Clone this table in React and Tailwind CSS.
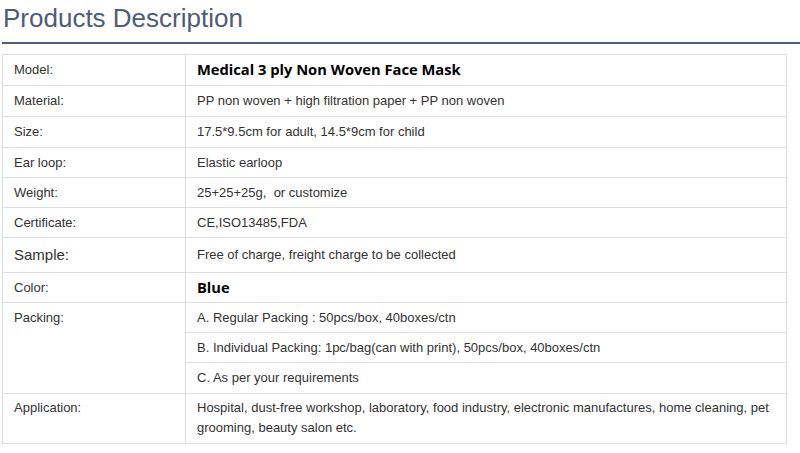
import React from "react";

const rows = [
  { label: "Model:", values: ["Medical 3 ply Non Woven Face Mask"], bold: true, h: "h-[31px]" },
  { label: "Material:", values: ["PP non woven + high filtration paper + PP non woven"], h: "h-[31px]" },
  { label: "Size:", values: ["17.5*9.5cm for adult, 14.5*9cm for child"], h: "h-[31px]" },
  { label: "Ear loop:", values: ["Elastic earloop"], h: "h-[30px]" },
  { label: "Weight:", values: ["25+25+25g,\u00a0 or customize"], h: "h-[30px]" },
  { label: "Certificate:", values: ["CE,ISO13485,FDA"], h: "h-[30px]" },
  { label: "Sample:", values: ["Free of charge, freight charge to be collected"], big: true, h: "h-[35px]" },
  { label: "Color:", values: ["Blue"], bold: true, h: "h-[30px]" },
];

const packing = [
  "A. Regular Packing : 50pcs/box, 40boxes/ctn",
  "B. Individual Packing: 1pc/bag(can with print), 50pcs/box, 40boxes/ctn",
  "C. As per your requirements",
];

export default function App() {
  return (
    <div className="w-[800px] h-[453px] bg-white overflow-hidden font-['Liberation_Sans',Arial,sans-serif] text-[#333]">
      <h1 className="mt-[3px] pl-[3px] text-[26px] leading-[30px] text-[#4e5c77]">Products Description</h1>
      <div className="mt-[9px] ml-[2px] h-[2px] bg-[#4f5e7a]"></div>

      <table className="mt-[10px] ml-[2px] w-[785px] border-collapse text-[13px] leading-[20px]">
        <tbody>
          {rows.map((r) => (
            <tr key={r.label} className={r.h}>
              <td
                className={`w-[183px] border border-[#dedede] pl-[11px] align-middle ${
                  r.big ? "text-[15px]" : ""
                }`}
              >
                {r.label}
              </td>
              <td className="border border-[#dedede] pl-[11px] align-middle">
                {r.bold ? (
                  <span className="font-['Open_Sans',sans-serif] font-bold text-[14.7px] text-black">
                    {r.values[0]}
                  </span>
                ) : (
                  r.values[0]
                )}
              </td>
            </tr>
          ))}
          {packing.map((p, i) => (
            <tr key={p} className={i === 2 ? "h-[31px]" : "h-[30px]"}>
              {i === 0 && (
                <td rowSpan={3} className="border border-[#dedede] pl-[11px] pt-[5px] align-top">
                  Packing:
                </td>
              )}
              <td className="border border-[#dedede] pl-[11px] align-middle">{p}</td>
            </tr>
          ))}
          <tr className="h-[50px]">
            <td className="border border-[#dedede] pl-[11px] pt-[4px] align-top">Application:</td>
            <td className="border border-[#dedede] pl-[11px] pr-[8px] py-[4px] align-top">
              Hospital, dust-free workshop, laboratory, food industry, electronic manufactures, home cleaning, pet grooming, beauty salon etc.
            </td>
          </tr>
        </tbody>
      </table>
    </div>
  );
}
